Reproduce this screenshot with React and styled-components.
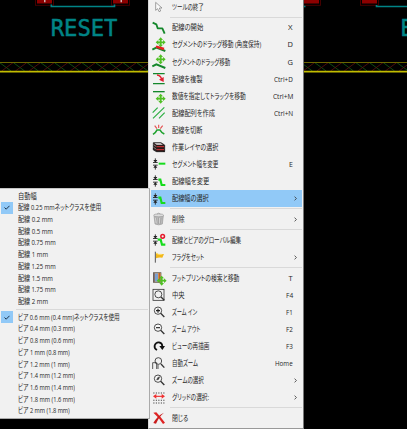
import React, { useLayoutEffect, useRef, useState } from "react";
import styled, { createGlobalStyle } from "styled-components";

const Global = createGlobalStyle`
  html, body { margin: 0; background: #000; overflow: hidden; }
  * { box-sizing: border-box; }
`;

const Screen = styled.div`
  position: relative;
  width: 407px;
  height: 429px;
  overflow: hidden;
  background: #000;
  font-family: "Open Sans", "Noto Sans CJK JP", sans-serif;
`;

const Board = styled.svg`
  display: block;
  width: 407px;
  height: 80px;
`;

const ContextMenu = styled.div`
  position: absolute;
  left: 148px;
  top: -2px;
  width: 156px;
  height: 430.5px;
  padding: 0.5px 1px 0 1.5px;
  background: #f1f1f1;
  border-left: 1px solid #d8d8d8;
  border-right: 1px solid #777;
  border-bottom: 1px solid #999;
`;

const SubMenu = styled.div`
  position: absolute;
  left: 0;
  top: 188px;
  width: 150px;
  height: 230.5px;
  padding-top: 1.2px;
  background: #f1f1f1;
  border-top: 1px solid #c4c4c4;
  border-right: 1.5px solid #aaa;
  border-bottom: 1px solid #aaa;
`;

const Row = styled.div`
  display: flex;
  align-items: center;
  height: 17.07px;
  padding-left: 1.5px;
  background: ${(p) => (p.$active ? "#91c9f7" : "transparent")};
`;

const SubRow = styled.div`
  display: flex;
  align-items: center;
  height: 11.74px;
`;

const Tick = styled.div`
  display: flex;
  align-items: center;
  justify-content: center;
  width: 12px;
  height: 11.7px;
  margin: 0 5.3px 0 1px;
  background: ${(p) => (p.$on ? "#91c9f7" : "transparent")};
`;

const Divider = styled.div`
  height: 1px;
  margin: 1.4px 0 1.4px 19.5px;
  background: #d9d9d9;
`;

const SubDivider = styled.div`
  height: 1px;
  margin: 1.4px 1px 1.3px 16px;
  background: #d9d9d9;
`;

const IconBox = styled.svg`
  width: 14px;
  height: 14px;
  flex: none;
  margin-right: 6.3px;
  overflow: visible;
  fill: none;
`;

const Fit = styled.span`
  display: block;
  flex: none;
  width: ${(p) => p.$width}px;
  height: 11px;
  font-size: 7.5px;
  line-height: 11px;
  color: #262626;
  white-space: nowrap;
  font-feature-settings: "palt";
`;

const Inner = styled.span`
  display: inline-block;
  transform-origin: 0 50%;
`;

const Keys = styled.div`
  margin-left: auto;
  margin-right: 9.5px;
`;

const Chevron = styled.svg`
  width: 3px;
  height: 5px;
  margin-left: auto;
  margin-right: 5.5px;
  fill: none;
  stroke: #333;
  stroke-width: 0.8;
`;

function Label({ width, children }) {
  const ref = useRef(null);
  const [scale, setScale] = useState(1);
  useLayoutEffect(() => {
    setScale(width / ref.current.offsetWidth);
  }, [width, children]);
  return (
    <Fit $width={width}>
      <Inner ref={ref} style={{ transform: `scaleX(${scale})` }}>{children}</Inner>
    </Fit>
  );
}

const G = "#14872b";
const L = "#16dc1c";

const Cross = ({ x, y }) => (
  <g transform={`translate(${x} ${y})`}>
    <path d="M-9 0H9M0 -9V9" stroke="#50c024" strokeWidth="5.5" />
    <path d="M0 -15L7 -7H-7ZM0 15L7 7H-7ZM-15 0L-7 -7V7ZM15 0L7 -7V7Z" fill="#50c024" />
  </g>
);
const Gauge = () => (
  <g>
    <path d="M10 4V12M10 38V29M3 16.5H17M3 24.5H17" stroke="#222" strokeWidth="2.6" />
    <path d="M4 9H16L10 17ZM4 32H16L10 24Z" fill="#222" />
  </g>
);
const Lens = ({ children }) => (
  <g>
    <circle cx="18" cy="17" r="11" stroke="#333" strokeWidth="2.6" fill="#f7f7f7" />
    <path d="M26 25L37 36" stroke="#333" strokeWidth="4" />
    {children}
  </g>
);

const icons = {
  cursor: <path d="M11 7V31L17 26L21 35L26 33L22 24H30Z" stroke="#777" strokeWidth="2" fill="#fafafa" />,
  route: <path d="M2 5L13 10L17 22L31 22L38 38" stroke={G} strokeWidth="5.5" strokeLinejoin="round" />,
  dragAngle: (
    <g>
      <Cross x={26} y={13} />
      <path d="M1 35L13 29L40 39" stroke={G} strokeWidth="6" />
      <path d="M12 26L36 33" stroke="#e62020" strokeWidth="7.5" />
    </g>
  ),
  drag: (
    <g>
      <Cross x={26} y={13} />
      <path d="M1 34L13 28L40 39" stroke={G} strokeWidth="6" />
    </g>
  ),
  duplicate: (
    <g>
      <path d="M3 5H38M3 35H38" stroke={G} strokeWidth="4" />
      <path d="M15 9Q25 10 29 21" stroke="#e02030" strokeWidth="4.5" />
      <path d="M35 15V30L21 23Z" fill="#e02030" />
    </g>
  ),
  moveExact: (
    <g>
      <path d="M3 8H38" stroke={G} strokeWidth="4" />
      <Cross x={26} y={29} />
    </g>
  ),
  array: <path d="M2 20L17 5M3 37L37 4M21 37L38 20" stroke="#2cae42" strokeWidth="3.6" />,
  cut: (
    <g>
      <path d="M3 34Q12 28 15 21H24Q28 29 37 33" stroke="#20a22f" strokeWidth="5" />
      <path d="M8 8L15 17M20 5V15M32 8L25 17" stroke="#e55050" strokeWidth="3.4" />
    </g>
  ),
  layers: (
    <g strokeLinejoin="round">
      <path d="M4 26L29 30L38 35H14L4 30Z" fill="#ddd" stroke="#111" strokeWidth="2.5" />
      <path d="M4 8H27L38 15V34H13L4 27Z" fill="#2b1717" stroke="#111" strokeWidth="2" />
      <path d="M7 10H26L33 14H14Z" fill="#eee" />
      <path d="M14 20H36M14 29H36" stroke="#d73538" strokeWidth="3" />
      <path d="M5 14L13 20M5 22L13 28" stroke="#ddd" strokeWidth="1.6" />
    </g>
  ),
  segWidth: (
    <g>
      <Gauge />
      <path d="M20 20H40" stroke={L} strokeWidth="6" />
    </g>
  ),
  trackWidth: (
    <g>
      <Gauge />
      <path d="M19 17H25L29 33H40" stroke={L} strokeWidth="6.5" />
    </g>
  ),
  trash: (
    <g stroke="#888" strokeWidth="1.6">
      <path d="M6 11H34L31 36Q20 41 9 36Z" fill="#bcbcbc" />
      <ellipse cx="20" cy="10" rx="15" ry="4.5" fill="#ddd" />
      <path d="M15 6Q20 1 25 6M13 17L15 35M20 17V36M27 17L25 35" />
      <path d="M11 18L13 34M23 18V34" stroke="#eee" />
    </g>
  ),
  global: (
    <g>
      <Gauge />
      <path d="M17 20H26L30 35H40" stroke={L} strokeWidth="6.5" />
      <circle cx="32" cy="10" r="5.5" stroke="#e51b2c" strokeWidth="4.5" />
    </g>
  ),
  flag: (
    <g>
      <path d="M10 5V38" stroke="#555" strokeWidth="3" />
      <path d="M12 8Q19 14 36 12L31 23Q20 21 12 25Z" fill="#f2b81b" />
      <path d="M12 10Q20 15 29 13" stroke="#ffe16b" strokeWidth="3" />
    </g>
  ),
  footprint: (
    <g>
      <rect x="4" y="5" width="23" height="29" fill="#e8a054" stroke="#555" strokeWidth="2" />
      <rect x="8" y="7" width="10" height="25" fill="#7a9fd0" />
      <path d="M22 6V34" stroke="#b8622c" strokeWidth="4" />
      <path d="M6 6V33" stroke="#4c4a58" strokeWidth="3" />
      <Cross x={29} y={29} />
    </g>
  ),
  center: (
    <g>
      <rect x="3" y="4" width="33" height="33" stroke="#333" strokeWidth="2.4" />
      <circle cx="19" cy="19" r="10.5" stroke="#333" strokeWidth="2.6" />
      <path d="M27 27L37 37" stroke="#333" strokeWidth="4" />
    </g>
  ),
  zoomIn: <Lens><path d="M12 17H24M18 11V23" stroke="#222" strokeWidth="3.4" /></Lens>,
  zoomOut: <Lens><path d="M12 17H24" stroke="#222" strokeWidth="3.4" /></Lens>,
  redraw: (
    <g>
      <path d="M15 33Q6 28 8 19Q12 9 21 10Q31 12 31 22" stroke="#111" strokeWidth="5.2" />
      <path d="M22 21H39L31 33Z" fill="#111" />
    </g>
  ),
  autoZoom: (
    <g>
      <circle cx="19" cy="15" r="10" stroke="#333" strokeWidth="2.6" />
      <path d="M27 24L37 35" stroke="#333" strokeWidth="4" />
      <path d="M2 39V20H14V39M18 26V39" stroke="#333" strokeWidth="2.4" />
    </g>
  ),
  zoomSel: <Lens><path d="M14 21L17 14L23 11L20 19Z" fill="#333" stroke="#333" strokeWidth="1.5" /></Lens>,
  grid: (
    <g>
      <path d="M4 6H38M4 28H38M4 36H38" stroke="#333" strokeWidth="3.2" strokeDasharray="3.2 4.3" />
      <path d="M9 16H33" stroke="#ef3030" strokeWidth="3.4" />
      <path d="M3 16L13 9V23ZM39 16L29 9V23Z" fill="#ef3030" />
    </g>
  ),
  close: (
    <g>
      <path d="M4 5L13 4Q26 18 39 35L33 39Q20 18 4 5Z" fill="#df2323" />
      <path d="M36 5Q21 17 12 38L4 36Q16 14 36 5Z" fill="#c91b1b" />
    </g>
  ),
};

const keyWidths = {
  X: 4.2, D: 5, G: 5, E: 3.7, T: 4, F1: 6.6, F2: 6.8, F3: 6.8, F4: 7,
  Home: 17.5, "Ctrl+D": 18.7, "Ctrl+M": 20, "Ctrl+N": 19,
};

const menu = [
  ["cursor", "ツールの終了", 32],
  null,
  ["route", "配線の開始", 31, "X"],
  ["dragAngle", "セグメントのドラッグ移動 (角度保持)", 89.5, "D"],
  ["drag", "セグメントのドラッグ移動", 58, "G"],
  ["duplicate", "配線を複製", 30.5, "Ctrl+D"],
  ["moveExact", "数値を指定してトラックを移動", 74, "Ctrl+M"],
  ["array", "配線配列を作成", 43, "Ctrl+N"],
  ["cut", "配線を切断", 30.5],
  ["layers", "作業レイヤの選択", 46],
  ["segWidth", "セグメント幅を変更", 46, "E"],
  ["trackWidth", "配線幅を変更", 37],
  ["trackWidth", "配線幅の選択", 37, ">"],
  null,
  ["trash", "削除", 12.7, ">"],
  null,
  ["global", "配線とビアのグローバル編集", 69],
  ["flag", "フラグをセット", 32, ">"],
  null,
  ["footprint", "フットプリントの検索と移動", 67, "T"],
  ["center", "中央", 12.7, "F4"],
  ["zoomIn", "ズーム イン", 25, "F1"],
  ["zoomOut", "ズーム アウト", 28.5, "F2"],
  ["redraw", "ビューの再描画", 37, "F3"],
  ["autoZoom", "自動ズーム", 26, "Home"],
  ["zoomSel", "ズームの選択", 31.5, ">"],
  ["grid", "グリッドの選択:", 37, ">"],
  null,
  ["close", "閉じる", 16.3],
];

const widths = [
  ["自動幅", 19],
  ["配線 0.25 mmネットクラスを使用", 83, true],
  ["配線 0.2 mm", 34.7],
  ["配線 0.5 mm", 34.7],
  ["配線 0.75 mm", 38],
  ["配線 1 mm", 30],
  ["配線 1.25 mm", 38],
  ["配線 1.5 mm", 34.7],
  ["配線 1.75 mm", 38],
  ["配線 2 mm", 30],
  null,
  ["ビア 0.6 mm (0.4 mm)ネットクラスを使用", 102, true],
  ["ビア 0.4 mm (0.3 mm)", 57],
  ["ビア 0.8 mm (0.6 mm)", 57],
  ["ビア 1 mm (0.8 mm)", 52],
  ["ビア 1.2 mm (1 mm)", 52],
  ["ビア 1.4 mm (1.2 mm)", 57],
  ["ビア 1.6 mm (1.4 mm)", 57],
  ["ビア 1.8 mm (1.6 mm)", 57],
  ["ビア 2 mm (1.8 mm)", 52],
];

const pads = [37, 113, 304, 362];
const nodes = Array.from({ length: 32 }, (_, i) => -0.5 + i * 13.7);

function PcbCanvas() {
  return (
    <Board viewBox="0 0 407 80" fill="none">
      {pads.map((x) => (
        <g key={x}>
          <rect x={x - 1.5} y="-5" width="18" height="10.3" stroke="#4c0000" strokeWidth="0.9" />
          <rect x={x} y="-5" width="15" height="8.5" fill="#8c0000" />
        </g>
      ))}
      <path d="M44.8 0V2.2M121.2 0V2.2" stroke="#ddd" strokeWidth="1.2" />
      <path d="M51.3 4.5V6.5H114.5V4.5M303 6.5H305.5M376.5 5V6.5H407" stroke="#008486" strokeWidth="1.6" />
      <g fill="#008486" stroke="#008486" strokeWidth="0.5" fontFamily="DejaVu Sans Mono, monospace" fontSize="22.2">
        <text x="50.7" y="36">RESET</text>
        <text x="400.3" y="36">E</text>
      </g>
      {nodes.map((x) => (
        <g key={x} strokeWidth="0.8">
          <path d={`M${x} 62.5L${x + 11.5} 71`} stroke="#145c14" />
          <path d={`M${x} 62.5L${x - 11.5} 71`} stroke="#5c1010" />
        </g>
      ))}
      <path d="M0 62.5H407" stroke="#6c6500" strokeWidth="1" />
      <path d="M0 71.6H407" stroke="#c2bc00" strokeWidth="1.8" />
    </Board>
  );
}

export default function App() {
  return (
    <Screen lang="ja">
      <Global />
      <PcbCanvas />
      <ContextMenu>
        {menu.map((m, i) =>
          m ? (
            <Row key={i} $active={m[1] === "配線幅の選択"}>
              <IconBox viewBox="0 0 42 42">{icons[m[0]]}</IconBox>
              <Label width={m[2]}>{m[1]}</Label>
              {m[3] === ">" ? (
                <Chevron viewBox="0 0 3 5"><path d="M0.6 0.6L2.4 2.5L0.6 4.4" /></Chevron>
              ) : (
                m[3] && <Keys><Label width={keyWidths[m[3]]}>{m[3]}</Label></Keys>
              )}
            </Row>
          ) : (
            <Divider key={i} />
          )
        )}
      </ContextMenu>
      <SubMenu>
        {widths.map((w, i) =>
          w ? (
            <SubRow key={i}>
              <Tick $on={w[2]}>
                {w[2] && (
                  <svg width="6" height="5" viewBox="0 0 6 5" fill="none" stroke="#1c3550">
                    <path d="M0.5 2.5L2.2 4.2L5.5 0.8" />
                  </svg>
                )}
              </Tick>
              <Label width={w[1]}>{w[0]}</Label>
            </SubRow>
          ) : (
            <SubDivider key={i} />
          )
        )}
      </SubMenu>
    </Screen>
  );
}
